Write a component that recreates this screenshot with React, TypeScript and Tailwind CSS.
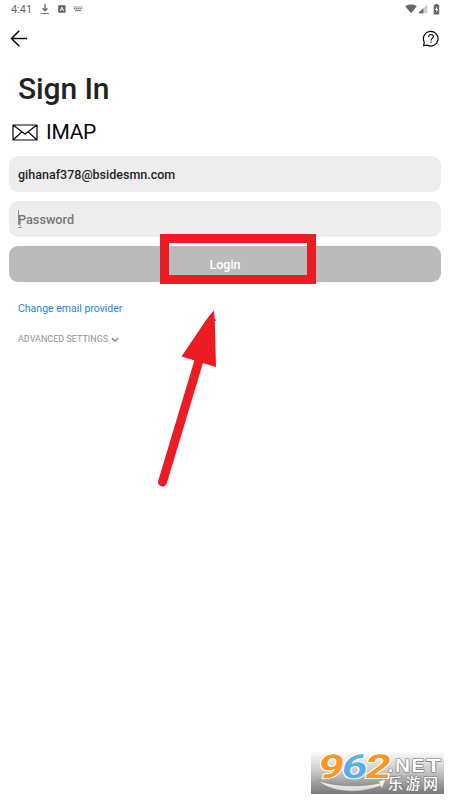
import React from "react";

function StatusBar() {
  return (
    <header className="flex h-[18px] items-center justify-between pl-[11px] pr-[10px] text-[#686868]">
      <div className="flex items-center">
        <span className="w-[30px] pt-px text-[11px] leading-[18px]">4:41</span>
        <svg className="h-[12px] w-[8px]" viewBox="0 0 8 12" fill="none" stroke="#666" strokeWidth="1.3">
          <path d="M4 1v6.5M1.6 5.2 4 7.8l2.4-2.6" />
          <path d="M.2 10.6h7.6" strokeWidth="1" />
        </svg>
        <svg className="ml-[9px] h-[8px] w-[8px]" viewBox="0 0 8 8">
          <rect x=".2" y=".2" width="7.3" height="7.6" rx=".8" fill="#606060" />
          <path d="M2.1 6.1 3.9 2l1.8 4.1M2.8 4.7h2.2" fill="none" stroke="#fff" strokeWidth=".9" />
        </svg>
        <svg className="ml-[7px] h-[6px] w-[10px]" viewBox="0 0 10 6" fill="none" stroke="#858585">
          <path d="M.4 1h9.2M.7 2.7h8.6" strokeWidth="1.2" strokeDasharray="1.5 .4" />
          <path d="M2 4.5h6" strokeWidth="1.2" />
        </svg>
      </div>
      <div className="flex items-center">
        <svg className="h-[10px] w-[12px]" viewBox="0 0 12 10">
          <path d="M.2 2.2C3.3-.2 8.7-.2 11.8 2.2L6 9.3z" fill="#666" />
        </svg>
        <svg className="ml-[1px] h-[10px] w-[10px]" viewBox="0 0 10 10">
          <path d="M.2 9.3 9.4.2v9.1z" fill="#cecece" />
          <path d="M.2 9.3 5.3 4.2v5.1z" fill="#666" />
        </svg>
        <svg className="ml-[5px] h-[11px] w-[7px]" viewBox="0 0 7 11">
          <path d="M2.2 0h2.6v1h1.4v9.6H.7V1h1.5z" fill="#666" />
          <path d="M4.1 2.4 2 6h1.3v2.6L5.2 5H4z" fill="#fff" />
        </svg>
      </div>
    </header>
  );
}

function Watermark() {
  return (
    <div className="absolute left-[311px] top-[751px] h-[43px] w-[133px] bg-linear-to-b from-white via-[#c5c5c5] to-[#777777]">
      <svg className="block h-full w-full overflow-visible" viewBox="0 0 133 43">
        <defs>
          <linearGradient id="smile" x1="0" y1="0" x2="0" y2="1">
            <stop stopColor="#fff" />
            <stop offset="1" stopColor="#d5d5d5" />
          </linearGradient>
        </defs>
        <path
          d="M7 29.5C21 35 48 37 69 32l-3-1.5 9-2.5-4 10-1.8-3C46 44 19 41 7 29.5z"
          fill="url(#smile)"
          stroke="#777"
          strokeWidth=".5"
        />
        <g
          transform="translate(5.8 26.8) skewX(-10)"
          fontFamily="Roboto, sans-serif"
          fontWeight="700"
          fontSize="33"
          stroke="#fff"
          strokeWidth="2"
          paintOrder="stroke"
          strokeLinejoin="round"
        >
          <text x="0" y="0" textLength="25.5" lengthAdjust="spacingAndGlyphs" fill="#f89828">9</text>
          <text x="23.5" y="0" textLength="25.5" lengthAdjust="spacingAndGlyphs" fill="#5ab0e4">6</text>
          <text x="47" y="0" textLength="25.5" lengthAdjust="spacingAndGlyphs" fill="#f89828">2</text>
        </g>
        <g fill="#fff" stroke="#777" strokeWidth="1.2" paintOrder="stroke" strokeLinejoin="round">
          <g fontFamily="Liberation Sans, sans-serif" fontSize="18" fontWeight="700">
            <text x="77" y="20.5">.</text>
            <text x="84" y="20.5" textLength="15" lengthAdjust="spacingAndGlyphs">N</text>
            <text x="100.5" y="20.5" textLength="13" lengthAdjust="spacingAndGlyphs">E</text>
            <text x="115" y="20.5" textLength="15" lengthAdjust="spacingAndGlyphs">T</text>
          </g>
          <text x="77" y="38.2" fontFamily="Noto Sans CJK SC, sans-serif" fontSize="15" fontWeight="500" textLength="50" lengthAdjust="spacing">乐游网</text>
        </g>
      </svg>
    </div>
  );
}

export default function App() {
  return (
    <main className="relative h-[800px] w-[450px] overflow-hidden bg-white font-['Roboto',sans-serif]">
      <StatusBar />
      <nav className="flex h-[42px] items-center justify-between pl-[10px] pr-[10px]">
        <button aria-label="Back">
          <svg className="block h-[18px] w-[18px]" viewBox="0 0 18 18" fill="none" stroke="#050505" strokeWidth="1.5">
            <path d="M17 8.5H1.3M9.3.8 1.5 8.5l7.8 7.8" />
          </svg>
        </button>
        <button aria-label="Help">
          <svg className="block h-[18px] w-[18px]" viewBox="0 0 18 18" fill="none" stroke="#080808" strokeWidth="1.2">
            <path d="M1.6 15.6l.7-3.4A7.3 7.3 0 1 1 5.4 15.2z" />
            <path d="M6.6 6.7c0-1.4 1-2.2 2.4-2.2s2.4.8 2.4 2.1c0 1.8-2.4 1.8-2.4 3.8" />
            <path d="M9 11.5v1.3" />
          </svg>
        </button>
      </nav>
      <h1 className="ml-[18px] mt-[9px] text-[30px] font-medium leading-[40px] tracking-[-0.1px] text-[#222]">Sign In</h1>
      <div className="ml-[12px] mt-[10px] flex h-[26px] items-center">
        <svg className="h-[17px] w-[26px]" viewBox="0 0 26 17" fill="none" stroke="#080808" strokeWidth="1.2">
          <path d="M1 1h24v15H1zM1 1l12 9L25 1M1 16l9-8.2M25 16l-9-8.2" />
        </svg>
        <span className="ml-[8px] text-[21px] leading-[26px] tracking-[-0.3px] text-[#080808]">IMAP</span>
      </div>
      <form className="mx-[9px] mt-[11px] flex flex-col gap-[9px]">
        <div className="flex h-[36px] items-center rounded-[9px] bg-[#ededed] px-[9px] pt-[2px] text-[12.5px] font-medium text-[#252525]">
          gihanaf378@bsidesmn.com
        </div>
        <div className="relative flex h-[36px] items-center rounded-[9px] bg-[#ededed] px-[9px] pt-px text-[12.7px] font-medium text-[#777]">
          Password
          <svg className="absolute left-[8px] top-[8px] h-[20px] w-[8px]" viewBox="0 0 8 20" fill="none" stroke="#777" strokeWidth=".8">
            <path d="M1.5 1v15M1.5 14.5 4 17M1 18.5h4" />
          </svg>
        </div>
        <button type="button" className="h-[36px] rounded-[9px] bg-[#bbb] pt-[3px] text-[12.5px] font-medium text-white">Login</button>
      </form>
      <a className="ml-[18px] mt-[18px] block w-fit text-[10.5px] leading-[17px] text-[#2188d9]">Change email provider</a>
      <div className="ml-[18px] mt-[15px] flex items-center text-[9px] leading-[15px] text-[#929292]">
        ADVANCED SETTINGS
        <svg className="ml-[3px] h-[6px] w-[8px]" viewBox="0 0 8 6" fill="none" stroke="#777" strokeWidth="1.3">
          <path d="m1 1.2 3 3 3-3" />
        </svg>
      </div>
      <div className="absolute left-[160px] top-[234px] h-[50px] w-[156px] border-[9px] border-[#ed1c24]" />
      <svg className="absolute left-[150px] top-[305px] h-[190px] w-[80px]" viewBox="150 305 80 190">
        <path d="M214 310.2 207.5 318 181.5 356.5 216 367 214.8 321 216 320.5 214.6 318z" fill="#ed1c24" />
        <path d="M199.5 359 162.5 482" stroke="#ed1c24" strokeWidth="9" strokeLinecap="round" />
      </svg>
      <Watermark />
    </main>
  );
}
